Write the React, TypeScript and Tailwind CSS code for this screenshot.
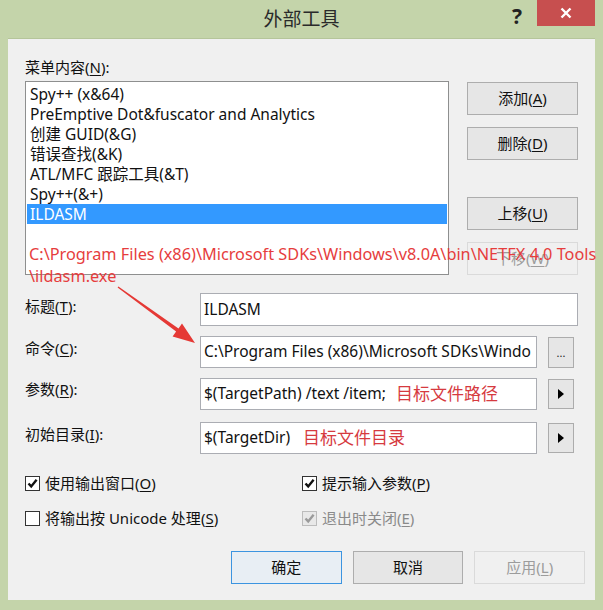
const font = "font-['Noto_Sans','Noto_Sans_CJK_SC',sans-serif]"

const items = [
  "Spy++ (x&64)",
  "PreEmptive Dot&fuscator and Analytics",
  "创建 GUID(&G)",
  "错误查找(&K)",
  "ATL/MFC 跟踪工具(&T)",
  "Spy++(&+)",
  "ILDASM",
]

type BtnProps = { label: string; mn?: string; disabled?: boolean; primary?: boolean }

const Btn = ({ label, mn, disabled, primary }: BtnProps) => (
  <div
    className={`w-[111px] h-[33px] flex items-center justify-center text-[15px] border ${
      primary
        ? "border-[#3c94e0] bg-[#e8eef4] text-[#111]"
        : disabled
        ? "border-[#dadada] bg-[#f0f0f0] text-[#9c9c9c]"
        : "border-[#adadad] bg-[#e6e6e6] text-[#111]"
    }`}
  >
    {label}
    {mn && (
      <>
        (<u className="underline-offset-2">{mn}</u>)
      </>
    )}
  </div>
)

const Check = ({ checked, disabled }: { checked?: boolean; disabled?: boolean }) => (
  <div
    className={`w-[15px] h-[15px] border flex items-center justify-center ${
      disabled ? "border-[#bcbcbc] bg-[#e8e8e8]" : "border-[#333] bg-white"
    }`}
  >
    {checked && (
      <svg width="11" height="11" viewBox="0 0 11 11">
        <path
          d="M1.5 5.5 L4.2 8.4 L9.6 1.8"
          fill="none"
          stroke={disabled ? "#9a9a9a" : "#111"}
          strokeWidth="2.4"
        />
      </svg>
    )}
  </div>
)

const Label = ({ text, mn, tail = "):" }: { text: string; mn: string; tail?: string }) => (
  <span className="text-[15px] text-[#111]">
    {text}(<u className="underline-offset-2">{mn}</u>{tail}
  </span>
)

const Arrow = () => (
  <svg width="16" height="16" viewBox="0 0 16 16">
    <path d="M5 3 L11 8 L5 13 Z" fill="#000" />
  </svg>
)

export default function App() {
  return (
    <div className={`relative w-[603px] h-[610px] bg-[#c4d4aa] flex flex-col ${font}`}>
      {/* title bar */}
      <div className="relative h-[38px] flex items-start">
        <div className="flex-1 text-center pt-[5px] text-[19px] text-[#2a2a2a]">外部工具</div>
        <div className="absolute left-[512px] top-[1px] text-[21px] font-bold text-[#222]">?</div>
        <div className="absolute left-[537px] top-0 w-[58px] h-[26px] bg-[#c74f4f] flex items-center justify-center">
          <svg width="12" height="12" viewBox="0 0 12 12">
            <path d="M1.5 1.5 L10.5 10.5 M10.5 1.5 L1.5 10.5" stroke="#fff" strokeWidth="2.4" />
          </svg>
        </div>
      </div>

      {/* body */}
      <div className="mx-[8px] h-[562px] bg-[#f0f0f0] border-t border-[#b5c59a] pl-[17px] pr-[10px] pt-[18px] flex flex-col">
        <div className="h-[20px] leading-[20px]">
          <Label text="菜单内容" mn="N" />
        </div>

        <div className="mt-[4px] flex">
          <div className="w-[424px] h-[194px] border border-[#8e8f8f] bg-white px-[1px] pt-[2px]">
            {items.map((it, i) => (
              <div
                key={i}
                className={`h-[20px] leading-[20px] pl-[3px] text-[15.5px] whitespace-nowrap ${
                  i === 6 ? "bg-[#3399ff] text-white" : "text-[#111]"
                }`}
              >
                {it}
              </div>
            ))}
          </div>
          <div className="ml-[18px] pt-[1px] flex flex-col">
            <Btn label="添加" mn="A" />
            <div className="mt-[12px]">
              <Btn label="删除" mn="D" />
            </div>
            <div className="mt-[37px]">
              <Btn label="上移" mn="U" />
            </div>
            <div className="mt-[12px]">
              <Btn label="下移" mn="W" disabled />
            </div>
          </div>
        </div>

        {/* fields */}
        <div className="mt-[18px] flex items-center">
          <div className="w-[175px] mb-[8px]">
            <Label text="标题" mn="T" />
          </div>
          <div className="w-[378px] h-[33px] border border-[#abadb3] bg-white flex items-center px-[3px] text-[15.5px] text-[#111]">
            ILDASM
          </div>
        </div>
        <div className="mt-[10px] flex items-center">
          <div className="w-[175px] mb-[8px]">
            <Label text="命令" mn="C" />
          </div>
          <div className="w-[337px] h-[32px] border border-[#abadb3] bg-white flex items-center px-[3px] text-[15.5px] text-[#111] whitespace-nowrap overflow-hidden">
            C:\Program Files (x86)\Microsoft SDKs\Windo
          </div>
          <div className="ml-[11px] w-[26px] h-[31px] border border-[#acacac] bg-[#e6e6e6] flex items-end justify-center pb-[9px] text-[11px] text-[#222] leading-none">
            ...
          </div>
        </div>
        <div className="mt-[9px] flex items-center">
          <div className="w-[175px] mb-[10px]">
            <Label text="参数" mn="R" />
          </div>
          <div className="w-[337px] h-[32px] border border-[#abadb3] bg-white flex items-center px-[3px] text-[15.5px] text-[#111] whitespace-nowrap">
            $(TargetPath) /text /item;
            <span className="ml-[10px] text-[17px] text-[#d63a3f]">目标文件路径</span>
          </div>
          <div className="ml-[11px] w-[26px] h-[30px] border border-[#acacac] bg-[#e6e6e6] flex items-center justify-center">
            <Arrow />
          </div>
        </div>
        <div className="mt-[11px] flex items-center">
          <div className="w-[175px] mb-[8px]">
            <Label text="初始目录" mn="I" />
          </div>
          <div className="w-[337px] h-[32px] border border-[#abadb3] bg-white flex items-center px-[3px] text-[15.5px] text-[#111] whitespace-nowrap">
            $(TargetDir)
            <span className="ml-[13px] text-[17px] text-[#d63a3f]">目标文件目录</span>
          </div>
          <div className="ml-[11px] w-[26px] h-[30px] border border-[#acacac] bg-[#e6e6e6] flex items-center justify-center">
            <Arrow />
          </div>
        </div>

        {/* checkboxes */}
        <div className="mt-[19px] flex h-[20px] items-center">
          <div className="w-[277px] flex items-center gap-[5px]">
            <Check checked />
            <Label text="使用输出窗口" mn="O" tail=")" />
          </div>
          <div className="flex items-center gap-[5px]">
            <Check checked />
            <Label text="提示输入参数" mn="P" tail=")" />
          </div>
        </div>
        <div className="mt-[15px] flex h-[20px] items-center">
          <div className="w-[277px] flex items-center gap-[5px]">
            <Check />
            <Label text="将输出按 Unicode 处理" mn="S" tail=")" />
          </div>
          <div className="flex items-center gap-[5px]">
            <Check checked disabled />
            <span className="text-[15px] text-[#8a8a8a]">
              退出时关闭(<u className="underline-offset-2">E</u>)
            </span>
          </div>
        </div>

        {/* bottom buttons */}
        <div className="mt-[23px] ml-[206px] flex gap-[11px]">
          <Btn label="确定" primary />
          <Btn label="取消" />
          <Btn label="应用" mn="L" disabled />
        </div>
      </div>

      {/* annotation overlay */}
      <div className="absolute left-[29px] top-[243px] text-[16.3px] leading-[22px] text-[#e63d3d] whitespace-nowrap pointer-events-none">
        <div>C:\Program Files (x86)\Microsoft SDKs\Windows\v8.0A\bin\NETFX 4.0 Tools</div>
        <div>\ildasm.exe</div>
      </div>
      <svg className="absolute left-0 top-0 pointer-events-none" width="603" height="610">
        <polygon
          points="117.6,287.6 118.4,286.4 178.5,328.4 182,323.6 195,343 172.6,336.4 176.1,331.6"
          fill="#e53935"
        />
      </svg>
    </div>
  )
}
